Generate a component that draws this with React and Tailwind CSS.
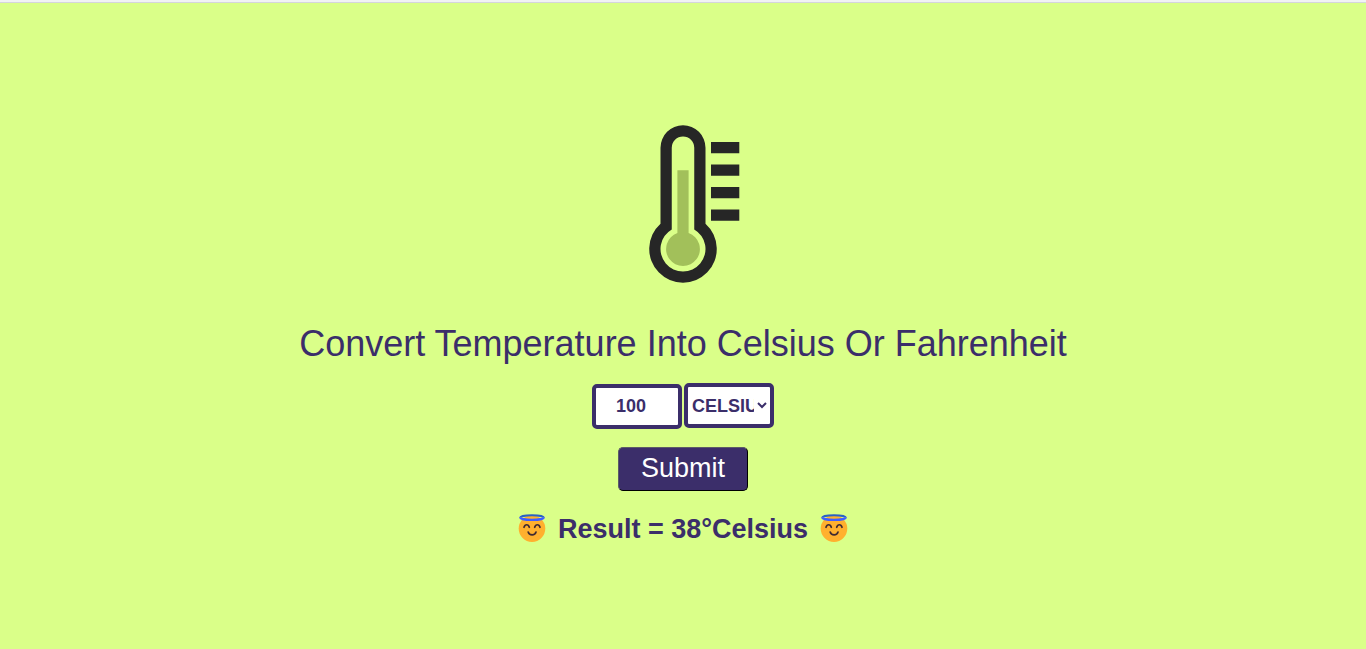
import { useState } from "react";

function Thermometer() {
  return (
    <svg viewBox="0 0 180 180" className="size-[180px]" aria-hidden="true">
      <path
        d="M67.5 109.8V33.75a22.5 22.5 0 0 1 45 0V109.8A33.75 33.75 0 1 1 67.5 109.8ZM78.75 115.5V33.75a11.25 11.25 0 0 1 22.5 0V115.5A22.5 22.5 0 1 1 78.75 115.5Z"
        fill="#262626"
        fillRule="evenodd"
      />
      <path
        d="M84.4 56.25h11.2V119.1a16.9 16.9 0 1 1-11.2 0Z"
        fill="#a2c05a"
      />
      <path
        d="M118 28h28.3v11.2H118ZM118 50.5h28.3v11.2H118ZM118 73h28.3v11.2H118ZM118 95.5h28.3v11.2H118Z"
        fill="#262626"
      />
    </svg>
  );
}

function HaloFace() {
  return (
    <svg viewBox="0 0 34 34" className="size-[34px]" aria-hidden="true">
      <circle cx="17" cy="16.6" r="13.3" fill="#ffb02e" />
      <path d="M5.2 5.6a11.8 2.4 0 0 1 23.6 0" fill="none" stroke="#2a62c4" strokeWidth="2" />
      <path d="M5.2 5.2a11.8 2.7 0 0 0 23.6 0" fill="none" stroke="#3f5fff" strokeWidth="2.4" />
      <path
        d="M9 15.3c1-3.4 4.4-3.4 5.3 0M19.7 15.3c1-3.4 4.4-3.4 5.3 0M13.2 20c1 3.8 6.8 3.8 7.8 0"
        fill="none"
        stroke="#402a32"
        strokeWidth="1.7"
        strokeLinecap="round"
      />
    </svg>
  );
}

export default function App() {
  const [value, setValue] = useState("100");
  const [unit, setUnit] = useState("celsius");

  return (
    <div className="flex min-h-screen flex-col bg-[#daff89] font-['Liberation_Sans',Arial,sans-serif] text-[#3b2e6a]">
      <div className="h-[3px] border-b border-[#d5d5dc] bg-[#f1f2f4]" />
      <main className="flex flex-1 flex-col items-center pt-[111px]">
        <Thermometer />
        <h1 className="mt-[30px] text-center text-4xl">Convert Temperature Into Celsius Or Fahrenheit</h1>
        <form className="mt-[19px] flex flex-col items-center" onSubmit={(e) => e.preventDefault()}>
          <div className="flex items-baseline gap-0.5">
            <input
              aria-label="Temperature"
              className="h-[45px] w-[90px] rounded-[5px] border-4 border-[#3b2e6a] bg-white px-5 text-lg font-bold outline-none"
              value={value}
              onChange={(e) => setValue(e.target.value)}
            />
            <select
              aria-label="Convert to"
              className="h-[45px] w-[90px] rounded-[5px] border-4 border-[#3b2e6a] bg-white text-lg font-bold outline-none"
              value={unit}
              onChange={(e) => setUnit(e.target.value)}
            >
              <option value="celsius">CELSIUS</option>
              <option value="fahrenheit">FAHRENHEIT</option>
            </select>
          </div>
          <button
            type="submit"
            className="mt-[18px] h-11 w-[130px] rounded-[5px] border border-t-[#5c5c66] border-r-black border-b-black border-l-[#5c5c66] bg-[#3b2e6a] pb-0.5 text-[27px] leading-8 text-white"
          >
            Submit
          </button>
        </form>
        <div className="mt-5 flex items-center gap-[9px]">
          <HaloFace />
          <p className="text-[27px] leading-9 font-bold">Result = 38°Celsius</p>
          <HaloFace />
        </div>
      </main>
    </div>
  );
}
